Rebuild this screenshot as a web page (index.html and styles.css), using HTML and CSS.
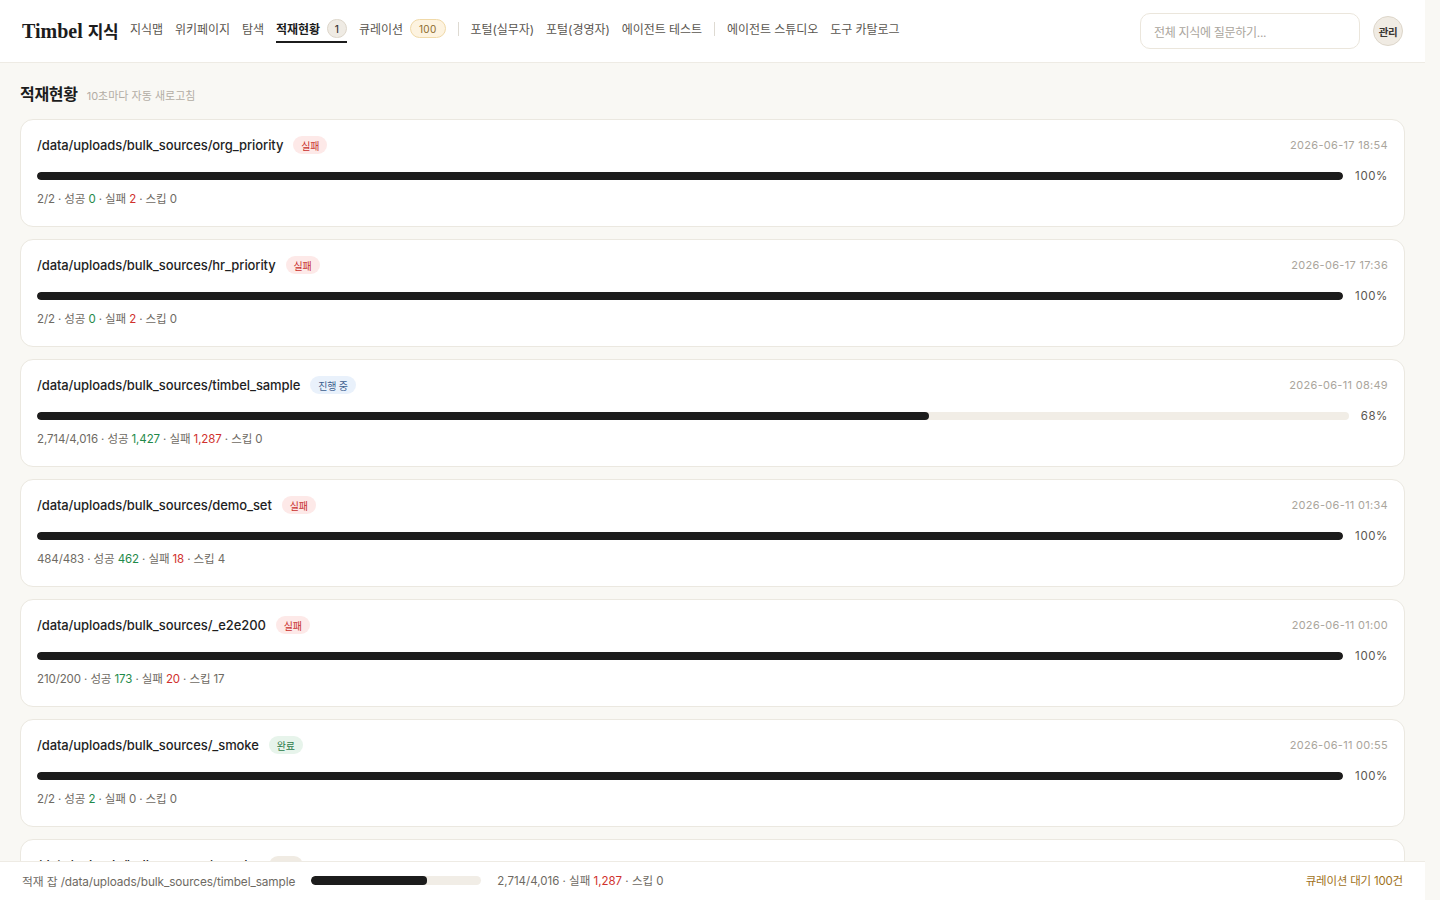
FILE: index.html
```html
<!DOCTYPE html>
<html lang="ko">
<head>
<meta charset="utf-8">
<title>Timbel 지식 - 적재현황</title>
<link rel="stylesheet" href="styles.css">
</head>
<body>
<div class="app">
  <header class="topbar">
    <div class="brand">Timbel <span class="brand-ko">지식</span></div>
    <nav class="nav">
      <a class="nav-item">지식맵</a>
      <a class="nav-item">위키페이지</a>
      <a class="nav-item">탐색</a>
      <a class="nav-item active">적재현황 <span class="count count-grey">1</span></a>
      <a class="nav-item">큐레이션 <span class="count count-gold">100</span></a>
      <span class="nav-sep"></span>
      <a class="nav-item">포털(실무자)</a>
      <a class="nav-item">포털(경영자)</a>
      <a class="nav-item">에이전트 테스트</a>
      <span class="nav-sep"></span>
      <a class="nav-item">에이전트 스튜디오</a>
      <a class="nav-item">도구 카탈로그</a>
    </nav>
    <div class="top-right">
      <div class="search">전체 지식에 질문하기...</div>
      <div class="admin">관리</div>
    </div>
  </header>

  <main class="main">
    <div class="page-title">
      <h1>적재현황</h1>
      <span class="sub">10초마다 자동 새로고침</span>
    </div>

    <section class="jobs">
      <article class="job">
        <div class="job-head">
          <span class="path">/data/uploads/bulk_sources/org_priority</span>
          <span class="badge fail">실패</span>
          <span class="date">2026-06-17 18:54</span>
        </div>
        <div class="progress-row">
          <div class="track"><div class="fill" style="width:100%"></div></div>
          <span class="pct">100%</span>
        </div>
        <div class="stats">2/2 · 성공 <b class="ok">0</b> · 실패 <b class="err">2</b> · 스킵 0</div>
      </article>

      <article class="job">
        <div class="job-head">
          <span class="path">/data/uploads/bulk_sources/hr_priority</span>
          <span class="badge fail">실패</span>
          <span class="date">2026-06-17 17:36</span>
        </div>
        <div class="progress-row">
          <div class="track"><div class="fill" style="width:100%"></div></div>
          <span class="pct">100%</span>
        </div>
        <div class="stats">2/2 · 성공 <b class="ok">0</b> · 실패 <b class="err">2</b> · 스킵 0</div>
      </article>

      <article class="job">
        <div class="job-head">
          <span class="path">/data/uploads/bulk_sources/timbel_sample</span>
          <span class="badge running">진행 중</span>
          <span class="date">2026-06-11 08:49</span>
        </div>
        <div class="progress-row">
          <div class="track"><div class="fill" style="width:68%"></div></div>
          <span class="pct">68%</span>
        </div>
        <div class="stats">2,714/4,016 · 성공 <b class="ok">1,427</b> · 실패 <b class="err">1,287</b> · 스킵 0</div>
      </article>

      <article class="job">
        <div class="job-head">
          <span class="path">/data/uploads/bulk_sources/demo_set</span>
          <span class="badge fail">실패</span>
          <span class="date">2026-06-11 01:34</span>
        </div>
        <div class="progress-row">
          <div class="track"><div class="fill" style="width:100%"></div></div>
          <span class="pct">100%</span>
        </div>
        <div class="stats">484/483 · 성공 <b class="ok">462</b> · 실패 <b class="err">18</b> · 스킵 4</div>
      </article>

      <article class="job">
        <div class="job-head">
          <span class="path">/data/uploads/bulk_sources/_e2e200</span>
          <span class="badge fail">실패</span>
          <span class="date">2026-06-11 01:00</span>
        </div>
        <div class="progress-row">
          <div class="track"><div class="fill" style="width:100%"></div></div>
          <span class="pct">100%</span>
        </div>
        <div class="stats">210/200 · 성공 <b class="ok">173</b> · 실패 <b class="err">20</b> · 스킵 17</div>
      </article>

      <article class="job">
        <div class="job-head">
          <span class="path">/data/uploads/bulk_sources/_smoke</span>
          <span class="badge done">완료</span>
          <span class="date">2026-06-11 00:55</span>
        </div>
        <div class="progress-row">
          <div class="track"><div class="fill" style="width:100%"></div></div>
          <span class="pct">100%</span>
        </div>
        <div class="stats">2/2 · 성공 <b class="ok">2</b> · 실패 0 · 스킵 0</div>
      </article>

      <article class="job">
        <div class="job-head">
          <span class="path">/data/uploads/bulk_sources/_smoke</span>
          <span class="badge cancel">취소</span>
          <span class="date">2026-06-11 00:41</span>
        </div>
        <div class="progress-row">
          <div class="track"><div class="fill" style="width:100%"></div></div>
          <span class="pct">100%</span>
        </div>
        <div class="stats">2/2 · 성공 <b class="ok">2</b> · 실패 0 · 스킵 0</div>
      </article>
    </section>
  </main>

  <footer class="jobbar">
    <span class="jb-label">적재 잡 /data/uploads/bulk_sources/timbel_sample</span>
    <div class="jb-track"><div class="fill" style="width:68%"></div></div>
    <span class="jb-stats">2,714/4,016 · 실패 <b class="err">1,287</b> · 스킵 0</span>
    <span class="jb-right">큐레이션 대기 100건</span>
  </footer>
</div>
</body>
</html>
```

FILE: styles.css
```css
* { box-sizing: border-box; }

html, body {
  margin: 0;
  padding: 0;
}

body {
  background: #f9f8f4;
  font-family: Inter, "Noto Sans CJK KR", sans-serif;
  color: #1f1f1f;
}

.app {
  width: 1425px;
  min-height: 100vh;
}

/* Top bar */
.topbar {
  height: 63px;
  background: #ffffff;
  border-bottom: 1px solid #eeebe4;
  display: flex;
  align-items: center;
  padding: 0 22px;
}

.brand {
  font-family: "Liberation Serif", serif;
  font-weight: 700;
  font-size: 20px;
  color: #1c1c1c;
  white-space: nowrap;
  margin-top: -2px;
}

.brand-ko {
  font-family: "Noto Sans CJK KR", sans-serif;
  font-weight: 700;
  font-size: 17px;
  letter-spacing: -0.5px;
}

.nav {
  display: flex;
  align-items: center;
  gap: 12px;
  margin-left: 12px;
  height: 100%;
}

.nav-item {
  font-family: Inter, "Noto Sans CJK KR", sans-serif;
  font-size: 12px;
  letter-spacing: -0.05px;
  color: #5a5650;
  display: flex;
  align-items: center;
  gap: 7px;
  height: 100%;
  margin-top: -5px;
  position: relative;
  white-space: nowrap;
}

.nav-item.active {
  color: #1c1c1c;
  font-weight: 700;
}

.nav-item.active::after {
  content: "";
  position: absolute;
  left: 0;
  right: 0;
  bottom: 17px;
  height: 2px;
  background: #1c1c1c;
}

.count {
  font-family: Inter, sans-serif;
  font-size: 10px;
  font-weight: 500;
  letter-spacing: 0.3px;
  height: 19px;
  min-width: 20px;
  border-radius: 10px;
  display: inline-flex;
  align-items: center;
  justify-content: center;
}

.count-grey {
  background: #efebe4;
  border: 1px solid #ddd6ca;
  color: #3a3733;
}

.count-gold {
  background: #fdf3e0;
  border: 1px solid #f0d9a8;
  color: #8a6a2c;
  padding: 0 8px;
  font-weight: 400;
}

.nav-sep {
  width: 1px;
  height: 14px;
  background: #dedad2;
  margin-top: -5px;
}

.top-right {
  margin-left: auto;
  display: flex;
  align-items: center;
  gap: 13px;
}

.search {
  width: 220px;
  height: 36px;
  border: 1px solid #ebe6dc;
  border-radius: 10px;
  padding: 0 13px;
  display: flex;
  align-items: center;
  font-size: 12px;
  letter-spacing: -0.3px;
  color: #aaa59d;
  background: #fff;
}

.admin {
  width: 30px;
  height: 30px;
  border-radius: 50%;
  background: #f0ebe3;
  border: 1px solid #ddd6ca;
  display: flex;
  align-items: center;
  justify-content: center;
  font-size: 10.5px;
  font-weight: 700;
  color: #3a3733;
  letter-spacing: -0.3px;
}

/* Main */
.main {
  padding: 18px 20px 80px;
}

.page-title {
  display: flex;
  align-items: baseline;
  gap: 9px;
  margin-bottom: 14px;
}

.page-title h1 {
  margin: 0;
  font-size: 16px;
  font-weight: 700;
  letter-spacing: -0.3px;
  color: #1c1c1c;
}

.page-title .sub {
  font-size: 11px;
  color: #b3ada4;
  letter-spacing: 0;
}

.jobs {
  display: flex;
  flex-direction: column;
  gap: 12px;
}

.job {
  background: #ffffff;
  border: 1px solid #ebe8e0;
  border-radius: 13px;
  padding: 15px 16px 20px;
  height: 108px;
}

.job-head {
  display: flex;
  align-items: center;
  height: 20px;
}

.path {
  font-size: 13px;
  font-weight: 500;
  color: #1f1f1f;
  letter-spacing: -0.1px;
}

.badge {
  margin-left: 10px;
  font-size: 10px;
  height: 18px;
  padding: 0 8px;
  border-radius: 9px;
  display: inline-flex;
  align-items: center;
  letter-spacing: -0.2px;
}

.badge.fail { background: #fde9e8; color: #c8302c; }
.badge.running { background: #e9f1fb; color: #3d5f8f; }
.badge.done { background: #e7f4eb; color: #2b7a48; }
.badge.cancel { background: #f0ebe3; color: #7a746a; }

.date {
  margin-left: auto;
  font-size: 11px;
  color: #aaa59c;
  letter-spacing: 0.3px;
}

.progress-row {
  display: flex;
  align-items: center;
  gap: 12px;
  margin-top: 11px;
  height: 20px;
}

.track {
  flex: 1;
  height: 8px;
  background: #f1ede6;
  border-radius: 4px;
  overflow: hidden;
}

.fill {
  height: 100%;
  background: #1c1c1c;
  border-radius: 4px;
}

.pct {
  font-size: 11.5px;
  color: #5a5650;
  letter-spacing: 0.6px;
}

.stats {
  margin-top: 5px;
  font-size: 11.5px;
  color: #6e6a63;
  letter-spacing: -0.1px;
  line-height: 16px;
}

.stats b, .jb-stats b {
  font-weight: 400;
}

.ok { color: #1f8a4a; }
.err { color: #d0312d; }

/* Bottom job bar */
.jobbar {
  position: fixed;
  left: 0;
  bottom: 0;
  width: 1425px;
  height: 39px;
  background: #ffffff;
  border-top: 1px solid #eeebe4;
  display: flex;
  align-items: center;
  padding: 0 22px 2px;
  font-size: 11.5px;
  color: #6e6a63;
}

.jb-label {
  font-size: 11.8px;
  letter-spacing: -0.1px;
}

.jb-track {
  width: 170px;
  height: 9px;
  background: #f1ede6;
  border-radius: 5px;
  overflow: hidden;
  margin-left: 16px;
}

.jb-stats {
  margin-left: 16px;
}

.jb-right {
  margin-left: auto;
  color: #a0721c;
  letter-spacing: -0.2px;
}
```
